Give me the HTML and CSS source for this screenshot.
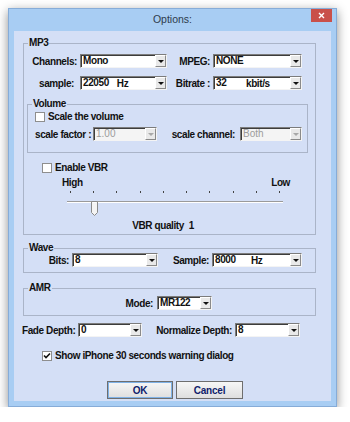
FILE: index.html
```html
<!DOCTYPE html>
<html lang="en">
<head>
    <meta charset="UTF-8">
    <meta name="viewport" content="width=device-width, initial-scale=1.0">
    <title>Options</title>
    <link rel="stylesheet" href="styles.css">
</head>
<body>
    <div class="window">
        <div class="titlebar">
            <span></span>
            <span class="title">Options:</span>
            <span class="close">
                <svg width="7" height="7" viewBox="0 0 7 7"><path d="M1 1L6 6M6 1L1 6" stroke="#fff" stroke-width="1.4"/></svg>
            </span>
        </div>

        <div class="client">
            <fieldset class="group mp3">
                <legend>MP3</legend>
                <div class="row mp3-row first">
                    <label>Channels:</label>
                    <div class="combo"><span class="val">Mono</span><i class="arrow"></i></div>
                    <label>MPEG:</label>
                    <div class="combo"><span class="val">NONE</span><i class="arrow"></i></div>
                </div>
                <div class="row mp3-row second">
                    <label class="pad">sample:</label>
                    <div class="combo"><span class="val">22050</span><span class="unit">Hz</span><i class="arrow"></i></div>
                    <label>Bitrate :</label>
                    <div class="combo"><span class="val num wide">32</span><span class="unit near">kbit/s</span><i class="arrow"></i></div>
                </div>

                <fieldset class="group volume">
                    <legend>Volume</legend>
                    <div class="check-row vol-check">
                        <span class="box"></span>
                        <span>Scale the volume</span>
                    </div>
                    <div class="row scale-row">
                        <label>scale factor :</label>
                        <div class="combo disabled"><span class="val">1.00</span><i class="arrow"></i></div>
                        <label>scale channel:</label>
                        <div class="combo disabled"><span class="val">Both</span><i class="arrow"></i></div>
                    </div>
                </fieldset>

                <div class="check-row vbr-check">
                    <span class="box"></span>
                    <span>Enable VBR</span>
                </div>
                <div class="scale-ends">
                    <span>High</span>
                    <span>Low</span>
                </div>
                <div class="ticks">
                    <i></i><i></i><i></i><i></i><i></i><i></i><i></i><i></i><i></i><i></i>
                </div>
                <div class="slider">
                    <div class="track"></div>
                    <svg class="thumb" width="7" height="15" viewBox="0 0 7 15">
                        <path d="M0.5 0.5H6.5V11.5L3.5 14.5L0.5 11.5Z" fill="#f4f4f4" stroke="#8a8a8a"/>
                        <path d="M1.5 1.5H5.5" stroke="#fff"/>
                    </svg>
                </div>
                <div class="quality">VBR quality&nbsp; 1</div>
            </fieldset>

            <fieldset class="group wave">
                <legend>Wave</legend>
                <div class="row wave-row">
                    <label>Bits:</label>
                    <div class="combo"><span class="val">8</span><i class="arrow"></i></div>
                    <label>Sample:</label>
                    <div class="combo"><span class="val num">8000</span><span class="unit far">Hz</span><i class="arrow"></i></div>
                </div>
            </fieldset>

            <fieldset class="group amr">
                <legend>AMR</legend>
                <div class="row amr-row">
                    <label>Mode:</label>
                    <div class="combo"><span class="val">MR122</span><i class="arrow"></i></div>
                </div>
            </fieldset>

            <div class="row depth-row">
                <label>Fade Depth:</label>
                <div class="combo"><span class="val">0</span><i class="arrow"></i></div>
                <label>Normalize Depth:</label>
                <div class="combo"><span class="val">8</span><i class="arrow"></i></div>
            </div>

            <div class="check-row iphone-check">
                <span class="box checked">
                    <svg width="8" height="8" viewBox="0 0 8 8"><path d="M1 3.5L3 5.5L7 1.5" fill="none" stroke="#111" stroke-width="1.6"/></svg>
                </span>
                <span>Show iPhone 30 seconds warning dialog</span>
            </div>

            <div class="buttons">
                <button class="btn default">OK</button>
                <button class="btn">Cancel</button>
            </div>
        </div>
    </div>
</body>
</html>
```

FILE: styles.css
```css
body {
    margin: 0;
    background: #ffffff;
    font-family: 'Liberation Sans', Arial, sans-serif;
    font-size: 10px;
    font-weight: bold;
    letter-spacing: -0.4px;
    color: #111;
    overflow: hidden;
}

.window {
    box-sizing: border-box;
    width: 329px;
    height: 399px;
    margin: 8px 0 0 8px;
    border: 1px solid #86acd8;
    padding: 0 5px 5px;
    background: #a8cdf3;
    box-shadow: 0 3px 10px rgba(0, 0, 0, 0.45);
}

.titlebar {
    height: 22px;
    display: grid;
    grid-template-columns: 1fr auto 1fr;
}

.title {
    font-weight: normal;
    font-size: 10.5px;
    letter-spacing: 0;
    color: #2e3b4c;
    line-height: 20px;
}

.close {
    justify-self: end;
    width: 21px;
    height: 13px;
    margin-right: -1px;
    background: #c9504a;
    display: flex;
    align-items: center;
    justify-content: center;
}

.client {
    box-sizing: border-box;
    height: 370px;
    padding: 7px 15px 0 9px;
    background: #d4dff6;
}

/* group boxes */
.group {
    margin: 0;
    padding: 0;
    min-width: 0;
    border: 1px solid #aab4c8;
}

.group legend {
    margin-left: 4px;
    padding: 0 1px;
    height: 10px;
    line-height: 10px;
}

.row {
    display: grid;
    align-items: center;
    height: 14px;
}

.row label {
    text-align: right;
    white-space: nowrap;
    padding-right: 3px;
}

.mp3-row {
    grid-template-columns: 56px 87px 46px 89px;
}

.mp3-row.first {
    margin-top: 6px;
}

.mp3-row.second {
    margin-top: 8px;
}

.mp3-row label.pad {
    padding-right: 6px;
}

.volume {
    margin: 9px 7px 0 3px;
    padding-bottom: 11px;
}

.check-row {
    display: flex;
    align-items: center;
    gap: 3px;
    height: 13px;
}

.vol-check {
    margin-top: 1px;
    padding-left: 7px;
}

.scale-row {
    margin-top: 4px;
    padding-left: 7px;
    grid-template-columns: 58px 64px 83px 62px;
}

.scale-row label:first-child {
    text-align: left;
}

.scale-row label {
    padding-right: 5px;
}

.vbr-check {
    margin-top: 8px;
    padding-left: 18px;
}

.box {
    box-sizing: border-box;
    width: 10px;
    height: 10px;
    background: #fff;
    border: 1px solid #8e8e8e;
    display: flex;
    align-items: center;
    justify-content: center;
}

.scale-ends {
    display: flex;
    justify-content: space-between;
    width: 228px;
    margin: 3px 0 0 38px;
    line-height: 12px;
}

.ticks {
    display: flex;
    justify-content: space-between;
    width: 210px;
    height: 3px;
    margin: 2px 0 0 46px;
}

.ticks i {
    width: 1px;
    height: 2px;
    background: #444;
}

.slider {
    position: relative;
    width: 216px;
    height: 15px;
    margin: 1px 0 0 43px;
}

.track {
    margin-top: 7px;
    height: 0;
    border-top: 1px solid #9a9a9a;
    border-bottom: 1px solid #ffffff;
}

.thumb {
    position: absolute;
    left: 24px;
    top: 0;
}

.quality {
    margin-top: 4px;
    line-height: 12px;
    text-align: center;
    padding-right: 13px;
    padding-bottom: 2px;
}

.wave {
    margin-top: 8px;
    padding-bottom: 5px;
}

.wave-row {
    grid-template-columns: 48px 86px 54px 90px;
}

.amr {
    margin-top: 10px;
    padding-bottom: 5px;
}

.amr-row {
    margin-top: 3px;
    grid-template-columns: 133px 55px;
}

.amr-row label {
    padding-right: 4px;
}

.depth-row {
    margin: 7px 0 0 -1px;
    grid-template-columns: 56px 64px 93px 65px;
}

.depth-row label:first-child {
    text-align: left;
}

.iphone-check {
    margin-top: 12px;
    padding-left: 19px;
}

/* combo boxes */
.combo {
    box-sizing: border-box;
    height: 14px;
    display: flex;
    align-items: center;
    background: #fff;
    border: 1px solid;
    border-color: #7c7c7c #f4f4f4 #f4f4f4 #7c7c7c;
    box-shadow: inset 1px 1px 0 #3c3c3c;
    padding-left: 2px;
    overflow: hidden;
}

.combo .val {
    flex: 0 0 auto;
    white-space: nowrap;
    line-height: 12px;
}

.combo .num {
    width: 24px;
}

.combo .num.wide {
    width: 29px;
}

.combo .unit {
    margin-left: 8px;
}

.combo .unit.near {
    margin-left: 1px;
}

.combo .unit.far {
    margin-left: 12px;
}

.combo .arrow {
    margin-left: auto;
    width: 11px;
    height: 12px;
    box-sizing: border-box;
    background: #e9e9e9;
    border: 1px solid;
    border-color: #fff #8a8a8a #8a8a8a #fff;
    position: relative;
}

.combo .arrow:after {
    content: '';
    position: absolute;
    left: 2px;
    top: 4px;
    border-left: 3px solid transparent;
    border-right: 3px solid transparent;
    border-top: 3px solid #111;
}

.combo.disabled {
    background: #f4f4f4;
    color: #9c9c9c;
    font-weight: normal;
    letter-spacing: 0;
}

.combo.disabled .arrow:after {
    border-top-color: #a8a8a8;
}

/* buttons */
.buttons {
    display: flex;
    gap: 3px;
    margin-top: 19px;
    padding-left: 84px;
}

.btn {
    height: 18px;
    padding: 0;
    font-family: inherit;
    font-size: 10px;
    font-weight: bold;
    letter-spacing: -0.2px;
    color: #101d6b;
    background: linear-gradient(#f6f6f6, #dedede);
    border: 1px solid #6e6e6e;
    width: 67px;
}

.btn.default {
    width: 66px;
    box-shadow: inset 0 0 0 1px #7fb1e6;
}
```
